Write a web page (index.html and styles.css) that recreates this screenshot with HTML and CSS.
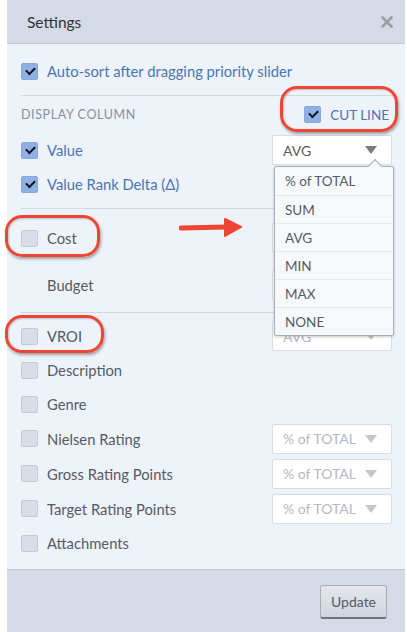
FILE: index.html
```html
<!DOCTYPE html>
<html lang="en">

<head>
    <meta charset="UTF-8">
    <meta name="viewport" content="width=device-width, initial-scale=1.0">
    <title>Settings</title>
    <link rel="stylesheet" href="styles.css">
</head>

<body>
    <div class="modal">
        <div class="modal-header">
            <span class="modal-title">Settings</span>
            <svg class="close-icon" width="12" height="12" viewBox="0 0 12 12">
                <path d="M1.5 1.5 L10.5 10.5 M10.5 1.5 L1.5 10.5" stroke="#9a9fa7" stroke-width="2.6" stroke-linecap="round" />
            </svg>
        </div>

        <div class="modal-body">
            <div class="row row-top">
                <span class="check checked"></span>
                <span class="label active">Auto-sort after dragging priority slider</span>
            </div>
            <div class="divider div-top"></div>

            <div class="section-head">
                <span class="section-title">DISPLAY COLUMN</span>
                <span class="cutline">
                    <span class="check checked"></span>
                    <span class="label active">CUT LINE</span>
                </span>
            </div>

            <div class="row">
                <span class="check checked"></span>
                <span class="label active">Value</span>
                <div class="select open">
                    <span>AVG</span><span class="caret"></span>
                    <ul class="menu">
                        <li>% of TOTAL</li>
                        <li>SUM</li>
                        <li>AVG</li>
                        <li>MIN</li>
                        <li>MAX</li>
                        <li>NONE</li>
                    </ul>
                </div>
            </div>
            <div class="row">
                <span class="check checked"></span>
                <span class="label active">Value Rank Delta (&Delta;)</span>
            </div>
            <div class="divider div-mid"></div>

            <div class="row row-cost">
                <span class="check"></span>
                <span class="label">Cost</span>
                <div class="select disabled"><span>AVG</span><span class="caret"></span></div>
            </div>
            <div class="row row-budget">
                <span class="label indent">Budget</span>
                <div class="select disabled"><span>AVG</span><span class="caret"></span></div>
            </div>
            <div class="divider div-low"></div>

            <div class="row row-vroi">
                <span class="check"></span>
                <span class="label">VROI</span>
                <div class="select disabled"><span>AVG</span><span class="caret"></span></div>
            </div>
            <div class="row">
                <span class="check"></span>
                <span class="label">Description</span>
            </div>
            <div class="row">
                <span class="check"></span>
                <span class="label">Genre</span>
            </div>
            <div class="row row-select">
                <span class="check"></span>
                <span class="label">Nielsen Rating</span>
                <div class="select disabled"><span>% of TOTAL</span><span class="caret"></span></div>
            </div>
            <div class="row row-select">
                <span class="check"></span>
                <span class="label">Gross Rating Points</span>
                <div class="select disabled"><span>% of TOTAL</span><span class="caret"></span></div>
            </div>
            <div class="row row-select">
                <span class="check"></span>
                <span class="label">Target Rating Points</span>
                <div class="select disabled"><span>% of TOTAL</span><span class="caret"></span></div>
            </div>
            <div class="row">
                <span class="check"></span>
                <span class="label">Attachments</span>
            </div>
        </div>

        <div class="modal-footer">
            <button class="btn-update">Update</button>
        </div>

        <!-- annotations drawn on top of the screenshot -->
        <div class="mark mark-cutline"></div>
        <div class="mark mark-cost"></div>
        <div class="mark mark-vroi"></div>
        <svg class="arrow" width="64" height="22" viewBox="0 0 64 22">
            <path d="M2 11 L48 10" stroke="#ee4634" stroke-width="5" stroke-linecap="round" />
            <path d="M46 2 L62 10 L46 19 Z" fill="#ee4634" stroke="#ee4634" stroke-width="2" stroke-linejoin="round" />
        </svg>
    </div>
</body>

</html>
```

FILE: styles.css
```css
body {
    margin: 0;
    padding-left: 7px;
    background-color: #fff;
    font-family: "Lato", "Noto Sans", sans-serif;
}

.modal {
    position: relative;
    width: 398px;
    height: 632px;
    display: flex;
    flex-direction: column;
    background-color: #eef2f9;
}

.modal-header {
    height: 43px;
    border-bottom: 1px solid #c3c9d3;
    background-color: #d4dbe6;
    display: flex;
    align-items: center;
    justify-content: space-between;
    padding: 0 12px 0 20px;
}

.modal-title {
    font-size: 15.5px;
    color: #333;
}

.close-icon {
    display: block;
}

.modal-body {
    flex: 1;
    padding: 0 13px 0 14px;
    display: flex;
    flex-direction: column;
}

.row {
    position: relative;
    height: 34px;
    display: flex;
    align-items: center;
}

.row-top {
    margin-top: 10px;
}

.row-cost {
    margin-top: 12px;
}

.row-budget {
    margin-top: 13px;
}

.row-vroi {
    margin-top: 6px;
}

.row-select {
    height: 35px;
}

.divider {
    height: 1px;
    background-color: #d3d8e0;
}

.div-top {
    margin-top: 7px;
}

.div-mid {
    margin-top: 7px;
}

.div-low {
    margin-top: 10px;
}

.section-head {
    height: 37px;
    display: flex;
    align-items: center;
    justify-content: space-between;
}

.section-title {
    font-size: 12.5px;
    letter-spacing: 0.6px;
    color: #8a9099;
}

.cutline {
    display: flex;
    align-items: center;
    padding-right: 3px;
}

.cutline .label {
    font-size: 13.5px;
}

.check {
    box-sizing: border-box;
    width: 17px;
    height: 17px;
    margin-right: 9px;
    border: 1px solid #c5cbd4;
    border-radius: 2px;
    background-color: #d8dee8;
    position: relative;
    flex-shrink: 0;
}

.check.checked {
    border-color: #88a9dd;
    background-color: #8eb0e4;
}

.check.checked::after {
    content: "";
    position: absolute;
    left: 4px;
    top: 3px;
    width: 7px;
    height: 4px;
    border-left: 2.5px solid #111;
    border-bottom: 2.5px solid #111;
    transform: rotate(-45deg);
}

.label {
    font-size: 14.75px;
    color: #555b66;
}

.label.active {
    color: #4a76b3;
}

.label.indent {
    padding-left: 26px;
}

.select {
    position: relative;
    box-sizing: border-box;
    margin-left: auto;
    width: 120px;
    height: 30px;
    padding: 0 14px 0 10px;
    display: flex;
    align-items: center;
    justify-content: space-between;
    background-color: #fff;
    border: 1px solid #d8dde5;
    border-radius: 2px;
    font-size: 14px;
    color: #555b66;
}

.caret {
    width: 0;
    height: 0;
    border-left: 6px solid transparent;
    border-right: 6px solid transparent;
    border-top: 8px solid #777c84;
}

.select.disabled {
    color: #b4b9c1;
}

.select.disabled .caret {
    border-top-color: #c3c8cf;
}

.menu {
    position: absolute;
    top: 30px;
    left: 1px;
    z-index: 10;
    width: 118px;
    margin: 0;
    padding: 0;
    list-style: none;
    background-color: #f7f8fa;
    border: 1px solid #a9aeb6;
    border-radius: 2px;
    box-shadow: 0 1px 3px rgba(0, 0, 0, 0.2);
}

.menu::before {
    content: "";
    position: absolute;
    top: -6px;
    right: 13px;
    width: 9px;
    height: 9px;
    background-color: #f7f8fa;
    border-left: 1px solid #a9aeb6;
    border-top: 1px solid #a9aeb6;
    transform: rotate(45deg);
}

.menu li {
    position: relative;
    height: 28px;
    line-height: 28px;
    padding-left: 10px;
    border-top: 1px solid #e6e9ee;
    font-size: 13.5px;
    color: #555b66;
    box-sizing: border-box;
}

.menu li:first-child {
    border-top: none;
}

.modal-footer {
    height: 63px;
    border-top: 1px solid #c3c9d3;
    background-color: #d4dbe6;
    display: flex;
    align-items: center;
    justify-content: flex-end;
    padding-right: 18px;
    box-sizing: border-box;
}

.btn-update {
    width: 67px;
    height: 34px;
    margin-top: 2px;
    font-family: "Lato", "Noto Sans", sans-serif;
    font-size: 14px;
    color: #555b66;
    background: linear-gradient(#e3e7ed, #d0d5dd);
    border: 1px solid #a9aeb6;
    border-bottom: 2px solid #6f747b;
    border-radius: 3px;
}

/* red callouts */
.mark {
    position: absolute;
    box-sizing: border-box;
    border: 3.5px solid #ee4634;
    border-radius: 17px;
    box-shadow: 1px 2px 3px rgba(0, 0, 0, 0.35), inset 1px 1px 2px rgba(0, 0, 0, 0.2);
    z-index: 20;
}

.mark-cutline {
    left: 273px;
    top: 86px;
    width: 118px;
    height: 46px;
}

.mark-cost {
    left: -2px;
    top: 215px;
    width: 95px;
    height: 42px;
}

.mark-vroi {
    left: -2px;
    top: 315px;
    width: 99px;
    height: 38px;
}

.arrow {
    position: absolute;
    left: 172px;
    top: 217px;
    z-index: 20;
}
```
